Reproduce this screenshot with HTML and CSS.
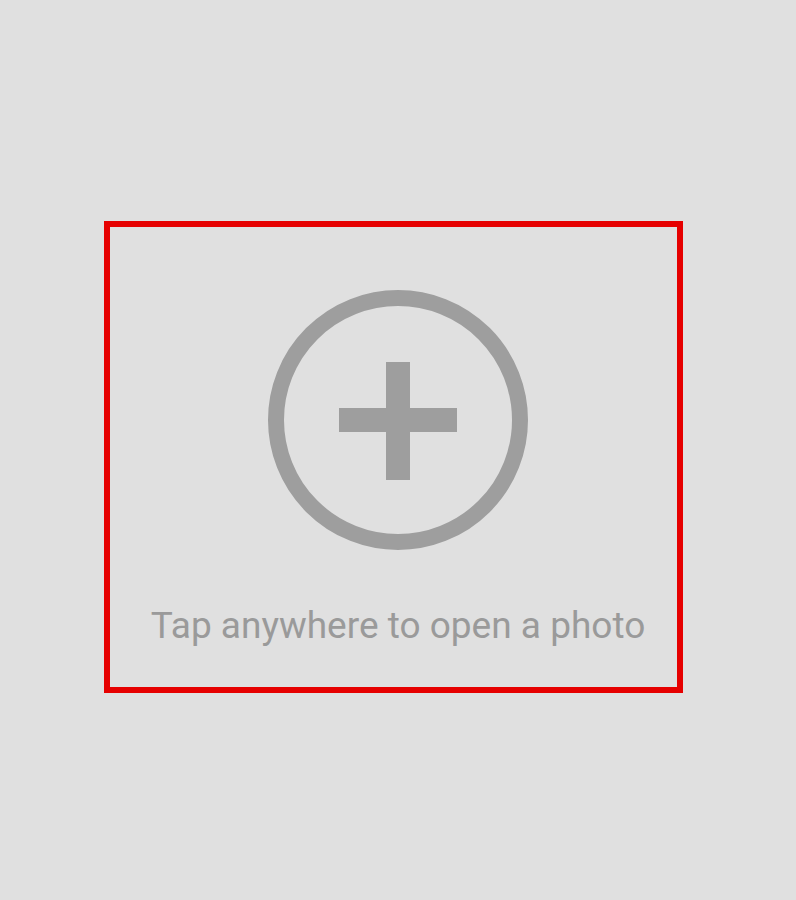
FILE: index.html
```html
<!DOCTYPE html>
<html>
<head>
<meta charset="utf-8">
<link rel="stylesheet" href="styles.css">
</head>
<body>
<div class="page">
  <div class="picker">
    <svg class="add-icon" width="262" height="262" viewBox="0 0 262 262">
      <circle cx="131" cy="131" r="122" fill="none" stroke="#9e9e9e" stroke-width="16"/>
      <rect x="72" y="119" width="118" height="24" fill="#9e9e9e"/>
      <rect x="119" y="73" width="24" height="118" fill="#9e9e9e"/>
    </svg>
    <div class="hint">Tap anywhere to open a photo</div>
  </div>
</div>
</body>
</html>
```

FILE: styles.css
```css
html, body {
  margin: 0;
  padding: 0;
  background: #e0e0e0;
}
.page {
  width: 796px;
  height: 900px;
  padding-top: 221px;
  padding-left: 104px;
  box-sizing: border-box;
}
.picker {
  width: 579px;
  height: 472px;
  box-sizing: border-box;
  border: 6px solid #e60000;
  display: flex;
  flex-direction: column;
  align-items: center;
  padding-top: 62px;
  padding-left: 9px;
}
.add-icon {
  display: block;
}
.hint {
  font-family: Roboto, "Noto Sans", sans-serif;
  font-size: 37px;
  line-height: 43px;
  color: #9a9a9a;
  margin-top: 53px;
  white-space: nowrap;
}
```
